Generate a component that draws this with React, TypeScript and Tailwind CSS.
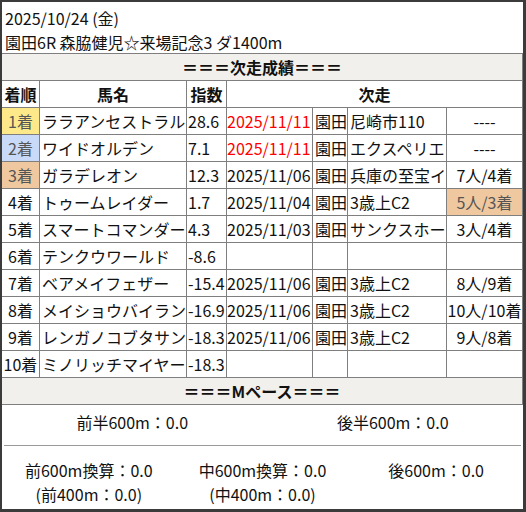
import React from 'react';

type Row = {
  rank: string;
  rankBg?: string;
  name: string;
  idx: string;
  date?: string;
  red?: boolean;
  place?: string;
  race?: string;
  res?: string;
  resBg?: string;
};

const ROWS: Row[] = [
  { rank: '1着', rankBg: 'bg-[#fde98a] text-[#555]', name: 'ララアンセストラル', idx: '28.6', date: '2025/11/11', red: true, place: '園田', race: '尼崎市110', res: '----' },
  { rank: '2着', rankBg: 'bg-[#c9daf8] text-[#555]', name: 'ワイドオルデン', idx: '7.1', date: '2025/11/11', red: true, place: '園田', race: 'エクスペリエ', res: '----' },
  { rank: '3着', rankBg: 'bg-[#efc89f] text-[#555]', name: 'ガラデレオン', idx: '12.3', date: '2025/11/06', place: '園田', race: '兵庫の至宝イ', res: '7人/4着' },
  { rank: '4着', name: 'トゥームレイダー', idx: '1.7', date: '2025/11/04', place: '園田', race: '3歳上C2', res: '5人/3着', resBg: 'bg-[#efc89f] text-[#555]' },
  { rank: '5着', name: 'スマートコマンダー', idx: '4.3', date: '2025/11/03', place: '園田', race: 'サンクスホー', res: '3人/4着' },
  { rank: '6着', name: 'テンクウワールド', idx: '-8.6' },
  { rank: '7着', name: 'ベアメイフェザー', idx: '-15.4', date: '2025/11/06', place: '園田', race: '3歳上C2', res: '8人/9着' },
  { rank: '8着', name: 'メイショウバイラン', idx: '-16.9', date: '2025/11/06', place: '園田', race: '3歳上C2', res: '10人/10着' },
  { rank: '9着', name: 'レンガノコブタサン', idx: '-18.3', date: '2025/11/06', place: '園田', race: '3歳上C2', res: '9人/8着' },
  { rank: '10着', name: 'ミノリッチマイヤー', idx: '-18.3' },
];

const cell = 'h-full border-r border-[#7f7f7f] overflow-hidden whitespace-nowrap flex items-center';

export default function App() {
  return (
    <div
      className="w-[526px] h-[512px] bg-white text-[16px] text-[#111] border-t-2 border-l-2 border-r-[3px] border-b-[3px] border-[#3b3b3b] flex flex-col overflow-hidden"
      style={{ fontFamily: '"Noto Sans CJK JP", "Noto Sans", sans-serif' }}
    >
      {/* title */}
      <div className="h-[52px] shrink-0 border-b border-[#7f7f7f] pl-[3px] pt-[4px] leading-[24px]">
        <div>2025/10/24 (金)</div>
        <div>園田6R 森脇健児☆来場記念3 ダ1400m</div>
      </div>

      {/* table */}
      <div className="border-r border-[#7f7f7f]">
        <div className="h-[27px] border-b border-[#7f7f7f] bg-[#f1f0ec] flex items-center justify-center font-bold">
          ＝＝＝次走成績＝＝＝
        </div>
        <div className="h-[27px] border-b border-[#7f7f7f] flex font-bold">
          <div className={`${cell} w-[38px] justify-center`}>着順</div>
          <div className={`${cell} w-[147px] justify-center`}>馬名</div>
          <div className={`${cell} w-[40px] justify-center`}>指数</div>
          <div className="h-full flex-1 flex items-center justify-center">次走</div>
        </div>
        {ROWS.map((r) => (
          <div key={r.rank} className="h-[27px] border-b border-[#7f7f7f] flex">
            <div className={`${cell} w-[38px] justify-center ${r.rankBg ?? ''}`}>{r.rank}</div>
            <div className={`${cell} w-[147px] pl-[2px]`}>{r.name}</div>
            <div className={`${cell} w-[40px] pl-[1px]`}>{r.idx}</div>
            <div className={`${cell} w-[86px] ${r.red ? 'text-[#ff0000]' : ''}`}>{r.date}</div>
            <div className={`${cell} w-[35px] pl-[2px]`}>{r.place}</div>
            <div className={`${cell} w-[99px] pl-[2px]`}>{r.race}</div>
            <div className={`h-full flex-1 flex items-center justify-center whitespace-nowrap overflow-hidden ${r.resBg ?? ''}`}>
              {r.res}
            </div>
          </div>
        ))}
        <div className="h-[27px] border-b border-[#7f7f7f] bg-[#f1f0ec] flex items-center justify-center font-bold">
          ＝＝＝Mペース＝＝＝
        </div>
      </div>

      {/* pace */}
      <div className="h-[40px] shrink-0 flex items-center pb-[6px]">
        <div className="flex-1 text-center">前半600m：0.0</div>
        <div className="flex-1 text-center">後半600m：0.0</div>
      </div>
      <div className="mx-[2px] h-px bg-[#9a9a9a]" />
      <div className="grid grid-cols-3 pt-[12px] leading-[24px] text-center">
        <div>
          <div>前600m換算：0.0</div>
          <div>(前400m：0.0)</div>
        </div>
        <div>
          <div>中600m換算：0.0</div>
          <div>(中400m：0.0)</div>
        </div>
        <div>
          <div>後600m：0.0</div>
        </div>
      </div>
    </div>
  );
}
